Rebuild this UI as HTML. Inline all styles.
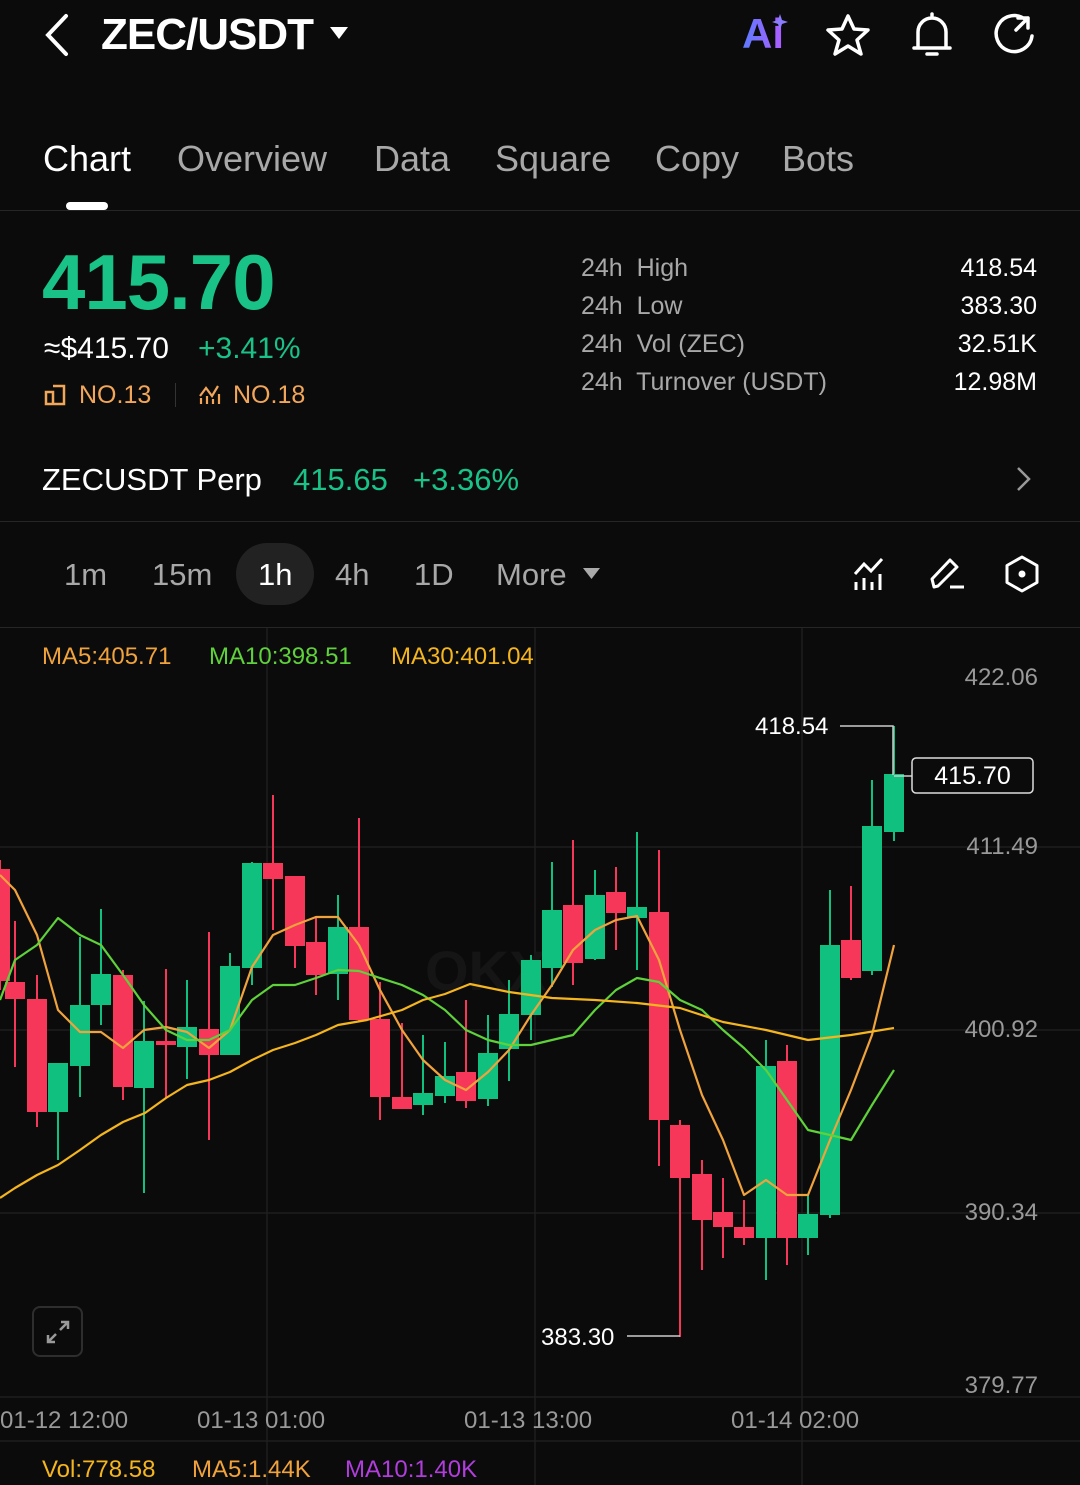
<!DOCTYPE html>
<html><head><meta charset="utf-8"><style>
*{margin:0;padding:0;box-sizing:border-box}
body{width:1080px;height:1485px;background:#0b0b0b;font-family:"Liberation Sans",sans-serif;color:#fff;position:relative;overflow:hidden}
.a{position:absolute;white-space:nowrap}
.g{color:#19c287}
.gr{color:#a8a8a8}
</style></head><body>
<svg class="a" style="left:40px;top:12px" width="34" height="46"><path d="M26 4 L8 23 L26 42" stroke="#fff" stroke-width="4" fill="none" stroke-linecap="round"/></svg>
<div class="a" style="left:101px;top:10px;font-size:44px;font-weight:bold;letter-spacing:-1px">ZEC/USDT</div>
<svg class="a" style="left:330px;top:27px" width="18" height="14"><path d="M0 0 H18 L9 12Z" fill="#fff"/></svg>
<div class="a" style="left:742px;top:10px;font-size:42px;font-weight:bold;color:#7b68ee;background:linear-gradient(90deg,#5a7cff,#b25cff);-webkit-background-clip:text;color:transparent">Ai</div>
<svg class="a" style="left:772px;top:14px" width="16" height="16"><path d="M8 0 L10 6 L16 8 L10 10 L8 16 L6 10 L0 8 L6 6Z" fill="#8a7cff"/></svg>
<svg class="a" style="left:822px;top:12px" width="52" height="46"><path d="M26 4 L32 17 L46 18 L35 28 L39 42 L26 34 L13 42 L17 28 L6 18 L20 17Z" stroke="#fff" stroke-width="3.5" fill="none" stroke-linejoin="round"/></svg>
<svg class="a" style="left:908px;top:10px" width="48" height="50"><path d="M24 4 V8 M10 38 V22 A14 14 0 0 1 38 22 V38 Z M6 38 H42 M19 44 H29" stroke="#fff" stroke-width="3.5" fill="none" stroke-linecap="round" stroke-linejoin="round"/></svg>
<svg class="a" style="left:992px;top:12px" width="48" height="46"><path d="M34 8 A18 18 0 1 0 40 24 M26 6 H36 V16 M36 6 L24 18" stroke="#fff" stroke-width="3.5" fill="none" stroke-linecap="round" stroke-linejoin="round"/></svg>

<div class="a" style="left:43px;top:138px;font-size:36px">Chart</div>
<div class="a gr" style="left:177px;top:138px;font-size:36px">Overview</div>
<div class="a gr" style="left:374px;top:138px;font-size:36px">Data</div>
<div class="a gr" style="left:495px;top:138px;font-size:36px">Square</div>
<div class="a gr" style="left:655px;top:138px;font-size:36px">Copy</div>
<div class="a gr" style="left:782px;top:138px;font-size:36px">Bots</div>
<div class="a" style="left:66px;top:202px;width:42px;height:8px;background:#fff;border-radius:4px"></div>
<div class="a" style="left:0;top:210px;width:1080px;height:1px;background:#262626"></div>

<div class="a g" style="left:42px;top:237px;font-size:78px;font-weight:bold;letter-spacing:-1px">415.70</div>
<div class="a" style="left:44px;top:332px;font-size:30px">≈$415.70</div>
<div class="a g" style="left:198px;top:332px;font-size:30px">+3.41%</div>
<svg class="a" style="left:44px;top:384px" width="22" height="22"><path d="M2 8 H9 V20 H2Z M9 2 H20 V20 H9" stroke="#f2a65a" stroke-width="2.5" fill="none"/></svg>
<div class="a" style="left:79px;top:381px;font-size:25px;color:#f2a65a">NO.13</div>
<div class="a" style="left:175px;top:383px;width:1px;height:24px;background:#333"></div>
<svg class="a" style="left:198px;top:384px" width="24" height="22"><path d="M2 12 L8 4 L14 12 L20 2 M3 20 V14 M9 20 V12 M15 20 V15 M21 20 V10" stroke="#f2a65a" stroke-width="2.2" fill="none"/></svg>
<div class="a" style="left:233px;top:381px;font-size:25px;color:#f2a65a">NO.18</div>

<div class="a gr" style="left:581px;top:249px;font-size:25px;line-height:38px">24h&nbsp; High<br>24h&nbsp; Low<br>24h&nbsp; Vol (ZEC)<br>24h&nbsp; Turnover (USDT)</div>
<div class="a" style="right:43px;top:249px;font-size:25px;line-height:38px;text-align:right">418.54<br>383.30<br>32.51K<br>12.98M</div>

<div class="a" style="left:42px;top:462px;font-size:31px">ZECUSDT Perp</div>
<div class="a g" style="left:293px;top:462px;font-size:31px">415.65</div>
<div class="a g" style="left:413px;top:462px;font-size:31px">+3.36%</div>
<svg class="a" style="left:1015px;top:466px" width="18" height="26"><path d="M3 2 L14 13 L3 24" stroke="#999" stroke-width="2.5" fill="none"/></svg>
<div class="a" style="left:0;top:521px;width:1080px;height:1px;background:#262626"></div>

<div class="a" style="left:236px;top:543px;width:78px;height:62px;border-radius:31px;background:#222"></div>
<div class="a gr" style="left:64px;top:557px;font-size:31px">1m</div>
<div class="a gr" style="left:152px;top:557px;font-size:31px">15m</div>
<div class="a" style="left:258px;top:557px;font-size:31px">1h</div>
<div class="a gr" style="left:335px;top:557px;font-size:31px">4h</div>
<div class="a gr" style="left:414px;top:557px;font-size:31px">1D</div>
<div class="a gr" style="left:496px;top:557px;font-size:31px">More</div>
<svg class="a" style="left:583px;top:568px" width="17" height="12"><path d="M0 0 H17 L8.5 11Z" fill="#aaa"/></svg>
<svg class="a" style="left:852px;top:556px" width="36" height="36"><path d="M3 18 L12 8 L19 15 L30 3 M4 34 V26 M12 34 V22 M20 34 V26 M28 34 V18" stroke="#fff" stroke-width="3" fill="none"/></svg>
<svg class="a" style="left:928px;top:555px" width="38" height="36"><path d="M6 32 L4 24 L22 5 L29 12 L10 31 Z M22 32 H36" stroke="#fff" stroke-width="3" fill="none" stroke-linejoin="round"/></svg>
<svg class="a" style="left:1002px;top:554px" width="40" height="40"><path d="M20 3 L35 11.5 V28.5 L20 37 L5 28.5 V11.5Z" stroke="#fff" stroke-width="3" fill="none" stroke-linejoin="round"/><circle cx="20" cy="20" r="3.5" fill="#fff"/></svg>
<div class="a" style="left:0;top:627px;width:1080px;height:1px;background:#262626"></div>

<svg class="a" style="left:0;top:0" width="1080" height="1485">
<g stroke="#1e1e1e" stroke-width="1.5">
<line x1="267" y1="628" x2="267" y2="1485"/><line x1="535" y1="628" x2="535" y2="1485"/><line x1="802" y1="628" x2="802" y2="1485"/>
<line x1="0" y1="847" x2="1080" y2="847"/><line x1="0" y1="1030" x2="1080" y2="1030"/><line x1="0" y1="1213" x2="1080" y2="1213"/>
<line x1="0" y1="1397" x2="1080" y2="1397"/><line x1="0" y1="1441" x2="1080" y2="1441"/>
</g>
<text x="425" y="990" font-size="56" font-weight="bold" fill="#151515" font-family="Liberation Sans">OKX</text>
<g stroke-width="2">
<g fill="#f6375a" stroke="#f6375a">
<line x1="0" y1="860" x2="0" y2="990"/><rect x="-9" y="870" width="18" height="110"/>
<line x1="15" y1="921" x2="15" y2="1067"/><rect x="6" y="983" width="18" height="15"/>
<line x1="37" y1="975" x2="37" y2="1127"/><rect x="28" y="1000" width="18" height="111"/>
<line x1="123" y1="970" x2="123" y2="1100"/><rect x="114" y="976" width="18" height="110"/>
<line x1="166" y1="969" x2="166" y2="1098"/><rect x="157" y="1042" width="18" height="2"/>
<line x1="209" y1="932" x2="209" y2="1140"/><rect x="200" y="1030" width="18" height="24"/>
<line x1="273" y1="795" x2="273" y2="930"/><rect x="264" y="864" width="18" height="14"/>
<line x1="295" y1="877" x2="295" y2="968"/><rect x="286" y="877" width="18" height="68"/>
<line x1="316" y1="916" x2="316" y2="995"/><rect x="307" y="943" width="18" height="31"/>
<line x1="359" y1="818" x2="359" y2="1022"/><rect x="350" y="928" width="18" height="91"/>
<line x1="380" y1="982" x2="380" y2="1120"/><rect x="371" y="1020" width="18" height="76"/>
<line x1="402" y1="1023" x2="402" y2="1108"/><rect x="393" y="1098" width="18" height="10"/>
<line x1="466" y1="1000" x2="466" y2="1108"/><rect x="457" y="1073" width="18" height="27"/>
<line x1="573" y1="840" x2="573" y2="985"/><rect x="564" y="906" width="18" height="56"/>
<line x1="616" y1="867" x2="616" y2="950"/><rect x="607" y="893" width="18" height="19"/>
<line x1="659" y1="850" x2="659" y2="1166"/><rect x="650" y="913" width="18" height="206"/>
<line x1="680" y1="1120" x2="680" y2="1337"/><rect x="671" y="1126" width="18" height="51"/>
<line x1="702" y1="1160" x2="702" y2="1270"/><rect x="693" y="1175" width="18" height="44"/>
<line x1="723" y1="1178" x2="723" y2="1258"/><rect x="714" y="1213" width="18" height="13"/>
<line x1="744" y1="1200" x2="744" y2="1245"/><rect x="735" y="1228" width="18" height="9"/>
<line x1="787" y1="1045" x2="787" y2="1265"/><rect x="778" y="1062" width="18" height="175"/>
<line x1="851" y1="886" x2="851" y2="980"/><rect x="842" y="941" width="18" height="36"/>
</g>
<g fill="#10c07f" stroke="#10c07f">
<line x1="58" y1="1063" x2="58" y2="1160"/><rect x="49" y="1064" width="18" height="47"/>
<line x1="80" y1="937" x2="80" y2="1097"/><rect x="71" y="1006" width="18" height="59"/>
<line x1="101" y1="909" x2="101" y2="1025"/><rect x="92" y="975" width="18" height="29"/>
<line x1="144" y1="1001" x2="144" y2="1193"/><rect x="135" y="1042" width="18" height="45"/>
<line x1="187" y1="980" x2="187" y2="1079"/><rect x="178" y="1028" width="18" height="18"/>
<line x1="230" y1="953" x2="230" y2="1055"/><rect x="221" y="967" width="18" height="87"/>
<line x1="252" y1="862" x2="252" y2="985"/><rect x="243" y="864" width="18" height="103"/>
<line x1="338" y1="895" x2="338" y2="1000"/><rect x="329" y="928" width="18" height="45"/>
<line x1="423" y1="1035" x2="423" y2="1115"/><rect x="414" y="1094" width="18" height="10"/>
<line x1="445" y1="1042" x2="445" y2="1103"/><rect x="436" y="1077" width="18" height="18"/>
<line x1="488" y1="1015" x2="488" y2="1106"/><rect x="479" y="1054" width="18" height="44"/>
<line x1="509" y1="980" x2="509" y2="1081"/><rect x="500" y="1015" width="18" height="33"/>
<line x1="531" y1="955" x2="531" y2="1040"/><rect x="522" y="961" width="18" height="53"/>
<line x1="552" y1="862" x2="552" y2="987"/><rect x="543" y="911" width="18" height="56"/>
<line x1="595" y1="870" x2="595" y2="960"/><rect x="586" y="896" width="18" height="62"/>
<line x1="637" y1="832" x2="637" y2="970"/><rect x="628" y="908" width="18" height="9"/>
<line x1="766" y1="1040" x2="766" y2="1280"/><rect x="757" y="1067" width="18" height="170"/>
<line x1="808" y1="1195" x2="808" y2="1255"/><rect x="799" y="1215" width="18" height="22"/>
<line x1="830" y1="890" x2="830" y2="1218"/><rect x="821" y="946" width="18" height="268"/>
<line x1="872" y1="780" x2="872" y2="975"/><rect x="863" y="827" width="18" height="143"/>
<line x1="894" y1="726" x2="894" y2="841"/><rect x="885" y="775" width="18" height="56"/>
</g>
</g>
<g fill="none" stroke-width="2.2" stroke-linejoin="round">
<polyline stroke="#f0a23c" points="0,875 15,890 37,935 58,1010 80,1032 101,1032 123,1048 144,1030 166,1027 187,1032 209,1048 230,1030 252,967 273,935 295,925 316,917 338,917 359,945 380,990 402,1030 423,1060 445,1080 466,1090 488,1072 509,1050 531,1015 552,985 573,950 595,930 616,920 637,916 659,960 680,1030 702,1095 723,1140 744,1195 766,1180 787,1195 808,1195 830,1140 851,1090 872,1035 894,945"/>
<polyline stroke="#5fd13a" points="0,1000 15,960 37,945 58,918 80,935 101,945 123,975 144,1005 166,1030 187,1040 209,1040 230,1030 252,1000 273,985 295,985 316,978 338,970 359,971 380,978 402,985 423,995 445,1010 466,1030 488,1040 509,1045 531,1045 552,1040 573,1035 595,1010 616,990 637,978 659,982 680,1000 702,1010 723,1030 744,1048 766,1070 787,1100 808,1130 830,1135 851,1140 872,1105 894,1070"/>
<polyline stroke="#f5b51f" points="0,1198 15,1188 37,1175 58,1165 80,1150 101,1135 123,1122 145,1113 166,1098 187,1085 209,1080 230,1072 252,1060 273,1050 295,1043 316,1035 338,1025 367,1020 402,1010 423,1000 445,994 470,984 509,992 552,998 595,1000 637,1003 680,1008 723,1022 766,1030 808,1040 851,1035 894,1028"/>
</g>
<polyline points="840,726 893,726 893,775" fill="none" stroke="#ccc" stroke-width="1.5"/>
<polyline points="627,1336 680,1336" fill="none" stroke="#ccc" stroke-width="1.5"/>
<line x1="894" y1="776" x2="912" y2="776" stroke="#ccc" stroke-width="1.5"/>
<rect x="912" y="758" width="121" height="35" rx="4" fill="#0b0b0b" stroke="#ddd" stroke-width="1.5"/>
</svg>
<div class="a" style="left:42px;top:643px;font-size:24px;color:#f0a23c">MA5:405.71</div>
<div class="a" style="left:209px;top:643px;font-size:24px;color:#5fd13a">MA10:398.51</div>
<div class="a" style="left:391px;top:643px;font-size:24px;color:#f5b51f">MA30:401.04</div>
<div class="a" style="right:42px;top:664px;font-size:24px;color:#999">422.06</div>
<div class="a" style="right:42px;top:833px;font-size:24px;color:#999">411.49</div>
<div class="a" style="right:42px;top:1016px;font-size:24px;color:#999">400.92</div>
<div class="a" style="right:42px;top:1199px;font-size:24px;color:#999">390.34</div>
<div class="a" style="right:42px;top:1372px;font-size:24px;color:#999">379.77</div>
<div class="a" style="left:755px;top:713px;font-size:24px">418.54</div>
<div class="a" style="left:541px;top:1324px;font-size:24px">383.30</div>
<div class="a" style="left:912px;top:762px;width:121px;text-align:center;font-size:25px">415.70</div>
<div class="a" style="left:32px;top:1306px;width:51px;height:51px;border:2px solid #2e2e2e;border-radius:8px"></div>
<svg class="a" style="left:44px;top:1318px" width="28" height="28"><path d="M16 12 L24 4 M17 4 H24 V11 M12 16 L4 24 M4 17 V24 H11" stroke="#999" stroke-width="2.5" fill="none"/></svg>
<div class="a" style="left:0;top:1407px;font-size:24px;color:#999">01-12 12:00</div>
<div class="a" style="left:197px;top:1407px;font-size:24px;color:#999">01-13 01:00</div>
<div class="a" style="left:464px;top:1407px;font-size:24px;color:#999">01-13 13:00</div>
<div class="a" style="left:731px;top:1407px;font-size:24px;color:#999">01-14 02:00</div>
<div class="a" style="left:42px;top:1456px;font-size:24px;color:#f5b51f">Vol:778.58</div>
<div class="a" style="left:192px;top:1456px;font-size:24px;color:#f0a23c">MA5:1.44K</div>
<div class="a" style="left:345px;top:1456px;font-size:24px;color:#b03ddc">MA10:1.40K</div>
</body></html>
